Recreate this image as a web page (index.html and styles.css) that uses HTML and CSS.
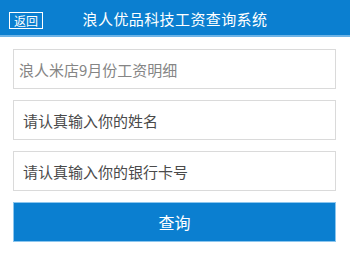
FILE: index.html
```html
<!DOCTYPE html>
<html lang="zh-CN">
<head>
    <meta charset="UTF-8">
    <title>浪人优品科技工资查询系统</title>
    <link rel="stylesheet" href="styles.css">
</head>
<body>
    <div class="header">
        <a class="back-btn" href="#">返回</a>
        <h1>浪人优品科技工资查询系统</h1>
    </div>
    <form class="query-form" onsubmit="return false">
        <input class="field field-title" type="text" value="浪人米店9月份工资明细" readonly>
        <input class="field" type="text" placeholder="请认真输入你的姓名">
        <input class="field" type="text" placeholder="请认真输入你的银行卡号">
        <button class="submit-btn" type="submit">查询</button>
    </form>
</body>
</html>
```

FILE: styles.css
```css
body {
    font-family: "Noto Sans CJK SC", "Liberation Sans", sans-serif;
    margin: 0;
    background-color: #fff;
    color: #333;
}
.header {
    position: relative;
    height: 35px;
    background: #0b7fd0;
    border-bottom: 2px solid #6db3e6;
    display: flex;
    align-items: center;
    justify-content: center;
}
.back-btn {
    position: absolute;
    left: 9px;
    top: 12px;
    width: 32px;
    height: 15px;
    border: 1px solid #fff;
    color: #fff;
    font-size: 12px;
    line-height: 15px;
    text-align: center;
    text-decoration: none;
}
.header h1 {
    margin: 2px 0 0;
    color: #fff;
    font-size: 15px;
    font-weight: normal;
    letter-spacing: 0.4px;
}
.query-form {
    display: flex;
    flex-direction: column;
    gap: 11px;
    padding: 12px 14px 0 13px;
}
.field {
    height: 40px;
    margin: 0;
    padding: 0 9px;
    border: 1px solid #dadada;
    box-sizing: border-box;
    font-family: inherit;
    font-size: 15px;
    color: #444;
    outline: none;
}
.field::placeholder {
    color: #4a4a4a;
}
.field-title {
    padding-left: 5px;
    color: #858585;
}
.submit-btn {
    height: 40px;
    border: 1px solid #8cc6ee;
    background: #0b7fd0;
    color: #fff;
    font-family: inherit;
    font-size: 16px;
    cursor: pointer;
}
```
